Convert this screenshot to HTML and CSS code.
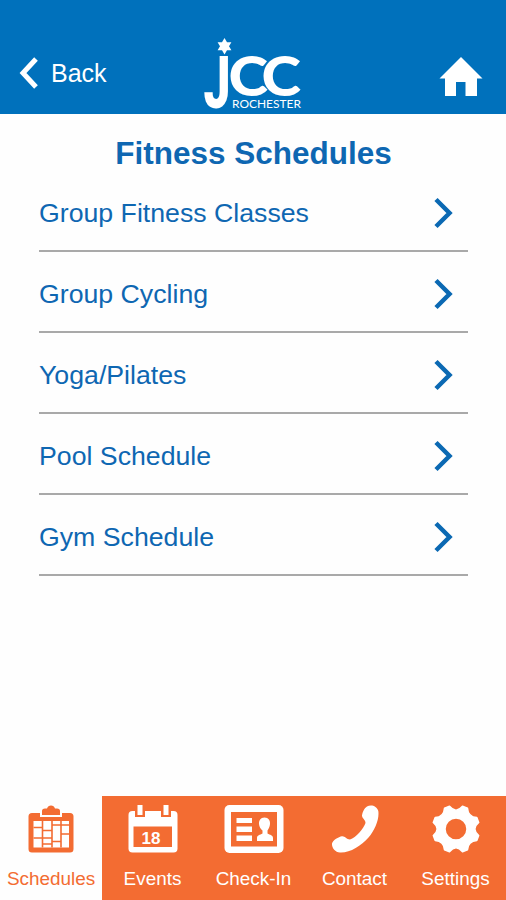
FILE: index.html
```html
<!DOCTYPE html>
<html lang="en">
<head>
    <meta charset="UTF-8">
    <meta name="viewport" content="width=device-width, initial-scale=1.0">
    <title>Fitness Schedules</title>
    <link rel="stylesheet" href="styles.css">
</head>
<body>
    <header class="header">
        <a class="back" href="#">
            <svg width="20" height="32" viewBox="0 0 20 32"><path d="M17 2 L4 16 L17 30" fill="none" stroke="#fff" stroke-width="5"/></svg>
            <span>Back</span>
        </a>
        <svg class="logo" width="106" height="76" viewBox="0 0 106 76">
            <path d="M24.5 2 L27 6.2 L31.4 6.2 L29 10.2 L31.4 14.2 L27 14.2 L24.5 18.4 L22 14.2 L17.6 14.2 L20 10.2 L17.6 6.2 L22 6.2 Z"/>
            <text class="logo-j" x="3.5" y="71.5" textLength="27" lengthAdjust="spacingAndGlyphs">J</text>
            <text class="logo-c" x="28.5" y="59.5" textLength="39.5" lengthAdjust="spacingAndGlyphs">C</text>
            <text class="logo-c" x="61.5" y="59.5" textLength="39.5" lengthAdjust="spacingAndGlyphs">C</text>
            <text class="logo-city" x="32" y="72" textLength="69" lengthAdjust="spacingAndGlyphs">ROCHESTER</text>
        </svg>
        <a class="home" href="#">
            <svg width="44" height="40" viewBox="0 0 44 40"><path d="M22 0 L43.5 21.5 H38 V39 H26.5 V25 H17 V39 H6 V21.5 H0.5 Z" fill="#fff"/></svg>
        </a>
    </header>

    <main class="content">
        <h1>Fitness Schedules</h1>
        <ul class="list">
            <li><a href="#">Group Fitness Classes</a><svg width="20" height="32" viewBox="0 0 20 32"><path d="M2 2.5 L15.5 16 L2 29.5"/></svg></li>
            <li><a href="#">Group Cycling</a><svg width="20" height="32" viewBox="0 0 20 32"><path d="M2 2.5 L15.5 16 L2 29.5"/></svg></li>
            <li><a href="#">Yoga/Pilates</a><svg width="20" height="32" viewBox="0 0 20 32"><path d="M2 2.5 L15.5 16 L2 29.5"/></svg></li>
            <li><a href="#">Pool Schedule</a><svg width="20" height="32" viewBox="0 0 20 32"><path d="M2 2.5 L15.5 16 L2 29.5"/></svg></li>
            <li><a href="#">Gym Schedule</a><svg width="20" height="32" viewBox="0 0 20 32"><path d="M2 2.5 L15.5 16 L2 29.5"/></svg></li>
        </ul>
    </main>

    <nav class="tabs">
        <a class="tab active" href="#">
            <svg width="46" height="48" viewBox="0 0 46 48">
                <path d="M4 8 H12 V12 H34 V8 H42 Q45.500 8 45.500 11.500 V44 Q45.500 47.500 42 47.500 H4 Q0.500 47.500 0.500 44 V11.500 Q0.500 8 4 8 Z"/>
                <path d="M14 10 V6 Q14 3.500 17 3.500 H19 Q20 0.500 23 0.500 Q26 0.500 27 3.500 H29 Q32 3.500 32 6 V10 Z"/>
                <rect x="5.500" y="16" width="35.500" height="26.500" fill="#fff"/>
                <path d="M14.500 16 V42.500 M24 16 V42.500 M33 16 V42.500 M5.500 22.500 H14.500 M5.500 33 H24 M14.500 25.500 H24 M14.500 39 H24 M24 20 H41 M33 29 H41 M24 36.500 H33" fill="none" stroke="#f36c32" stroke-width="1.600"/>
            </svg>
            <span>Schedules</span>
        </a>
        <a class="tab" href="#">
            <svg width="50" height="48" viewBox="0 0 50 48">
                <rect x="0.500" y="6" width="49" height="41.500" rx="4"/>
                <rect class="cut" x="7" y="0" width="10" height="12"/>
                <rect class="cut" x="33" y="0" width="10" height="12"/>
                <rect x="9.500" y="0" width="5" height="10"/>
                <rect x="35.500" y="0" width="5" height="10"/>
                <rect class="cut" x="5.500" y="21.500" width="38.500" height="20.500"/>
                <text class="day" x="23" y="38.500" text-anchor="middle">18</text>
            </svg>
            <span>Events</span>
        </a>
        <a class="tab" href="#">
            <svg width="60" height="48" viewBox="0 0 60 48">
                <rect x="0.500" y="0" width="59" height="48" rx="5"/>
                <rect class="cut" x="7" y="7" width="46" height="34.500"/>
                <path d="M12.500 13 H28 V18 H12.500 Z M12.500 21.500 H28 V27 H12.500 Z M12.500 30.500 H28 V36 H12.500 Z"/>
                <path d="M40.500 12.500 C44.500 12.500 46.300 15.500 46 19 C45.800 22 44.500 24 43.500 25.500 V28.500 C46 30 49 30 49 33 V36 H33 V33 C33 30 36 30 38.500 28.500 V25.500 C36.500 24 35.300 22 35 19 C34.800 15.500 36.500 12.500 40.500 12.500 Z"/>
            </svg>
            <span>Check-In</span>
        </a>
        <a class="tab" href="#">
            <svg width="48" height="48" viewBox="0 0 48 48">
                <path d="M36 1.500 C40 -1 46 1 47.300 6 C48.500 14 44 25 37.500 32.500 C30 41 19 48 9 47.500 C4 47.500 0.500 42 1 38.500 C2 35 7.500 32 11 31.300 C14 31 15.500 34.500 19 34.500 C25 32.500 32.500 24 34.500 18 C34.500 14.500 31 13.500 31 10.500 C31.500 7 33.500 3 36 1.500 Z"/>
            </svg>
            <span>Contact</span>
        </a>
        <a class="tab" href="#">
            <svg width="48" height="48" viewBox="-24 -24 48 48">
                <path fill-rule="evenodd" stroke="#fff" stroke-width="1.500" stroke-linejoin="round" d="M22.700 6.500 L20.800 11.500 Q12 12 11.500 20.800 L6.500 22.700 Q0 15 -6.500 22.700 L-11.500 20.800 Q-12 12 -20.800 11.500 L-22.700 6.500 Q-15 0 -22.700 -6.500 L-20.800 -11.500 Q-12 -12 -11.500 -20.800 L-6.500 -22.700 Q0 -15 6.500 -22.700 L11.500 -20.800 Q12 -12 20.800 -11.500 L22.700 -6.500 Q15 0 22.700 6.500 Z M11 0 A11 11 0 1 0 -11 0 A11 11 0 1 0 11 0 Z"/>
            </svg>
            <span>Settings</span>
        </a>
    </nav>
</body>
</html>
```
FILE: styles.css
```css
body {
    font-family: "Liberation Sans", Arial, sans-serif;
    background-color: #fefefe;
    margin: 0;
    height: 900px;
    display: flex;
    flex-direction: column;
}
a {
    color: inherit;
    text-decoration: none;
}
svg {
    display: block;
}
.header {
    background-color: #0071bc;
    color: #fff;
    height: 114px;
    box-sizing: border-box;
    padding: 36px 23px 0 19px;
    display: grid;
    grid-template-columns: 181px 106px 1fr;
    align-items: start;
}
.back {
    display: flex;
    align-items: center;
    gap: 12px;
    font-size: 25px;
    padding-top: 21px;
}
.logo {
    fill: #fff;
    overflow: visible;
}
.logo-j {
    font-family: Roboto, sans-serif;
    font-weight: 900;
    font-size: 73px;
}
.logo-c {
    font-family: Lato, sans-serif;
    font-weight: 900;
    font-size: 56px;
}
.logo-city {
    font-family: Lato, sans-serif;
    font-size: 12px;
}
.home {
    justify-self: end;
    padding-top: 21px;
}
.content {
    flex: 1;
    padding: 0 38px 0 39px;
    color: #0e67b2;
}
h1 {
    font-size: 31.5px;
    line-height: 36px;
    text-align: center;
    margin: 21px 0 0;
}
.list {
    list-style: none;
    margin: 0;
    padding: 0;
}
.list li {
    display: flex;
    align-items: center;
    justify-content: space-between;
    height: 81px;
    box-sizing: border-box;
    padding: 4px 14px 0 0;
    border-bottom: 2px solid #a9a9a9;
    font-size: 26.7px;
}
.list a {
    padding-top: 2px;
}
.list path {
    fill: none;
    stroke: #0b69b3;
    stroke-width: 4.5;
}
.tabs {
    display: flex;
    height: 104px;
    background-color: #f36c32;
}
.tab {
    flex: 1;
    display: flex;
    flex-direction: column;
    align-items: center;
    gap: 15px;
    padding-top: 9px;
    color: #fff;
    fill: #fff;
    font-size: 18.9px;
    line-height: 22px;
}
.tab.active {
    flex: 0 0 102px;
    background-color: #fefefe;
    color: #f36c32;
    fill: #f36c32;
}
.cut {
    fill: #f36c32;
}
.day {
    font-size: 17px;
    font-weight: bold;
}
```
